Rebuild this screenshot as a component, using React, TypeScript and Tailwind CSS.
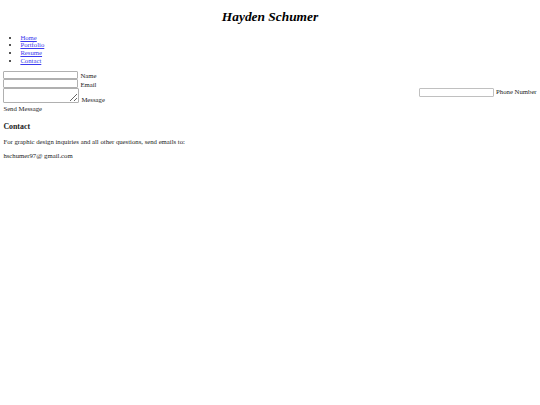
export default function App() {
  return (
    <div className="bg-white text-[#1a1a1a] text-[6.72px] leading-[7.7px] font-['Liberation_Serif',serif] px-[3.4px] min-h-[405px]">
      <h1 className="text-center italic font-bold text-[13.4px] leading-[15.5px] pt-[9px] pb-[9px] text-black">
        Hayden Schumer
      </h1>

      <ul className="list-disc pl-[17px]">
        {['Home', 'Portfolio', 'Resume', 'Contact'].map((l) => (
          <li key={l}>
            <a href="#" className="text-[#3a3aee] underline decoration-[0.5px]">
              {l}
            </a>
          </li>
        ))}
      </ul>

      <form className="mt-[6.7px]">
        <div className="flex items-end gap-[2px]">
          <input className="w-[75px] h-[8px] border border-[#b0b0b0] rounded-[1px]" />
          <span className="leading-[7px]">Name</span>
        </div>
        <div className="flex items-end gap-[2px]">
          <input className="w-[75px] h-[8.5px] border border-[#b0b0b0] rounded-[1px]" />
          <span className="leading-[7px]">Email</span>
        </div>
        <div className="flex justify-between">
          <div className="flex items-end gap-[2px]">
            <textarea className="w-[76px] h-[15px] border border-[#b0b0b0] rounded-[1px] resize" />
            <span className="leading-[7px]">Message</span>
          </div>
          <div className="flex items-center gap-[2px] h-[9px]">
            <input className="w-[75px] h-[9px] border border-[#c0c0c0] rounded-[1px]" />
            <span>Phone Number</span>
          </div>
        </div>
        <div className="mt-[2.5px]">Send Message</div>
      </form>

      <h3 className="font-bold text-[7.86px] leading-[9px] mt-[9px] mb-[6.8px]">Contact</h3>
      <p className="mb-[7px]">For graphic design inquiries and all other questions, send emails to:</p>
      <p>hschumer97@ gmail.com</p>
    </div>
  );
}
